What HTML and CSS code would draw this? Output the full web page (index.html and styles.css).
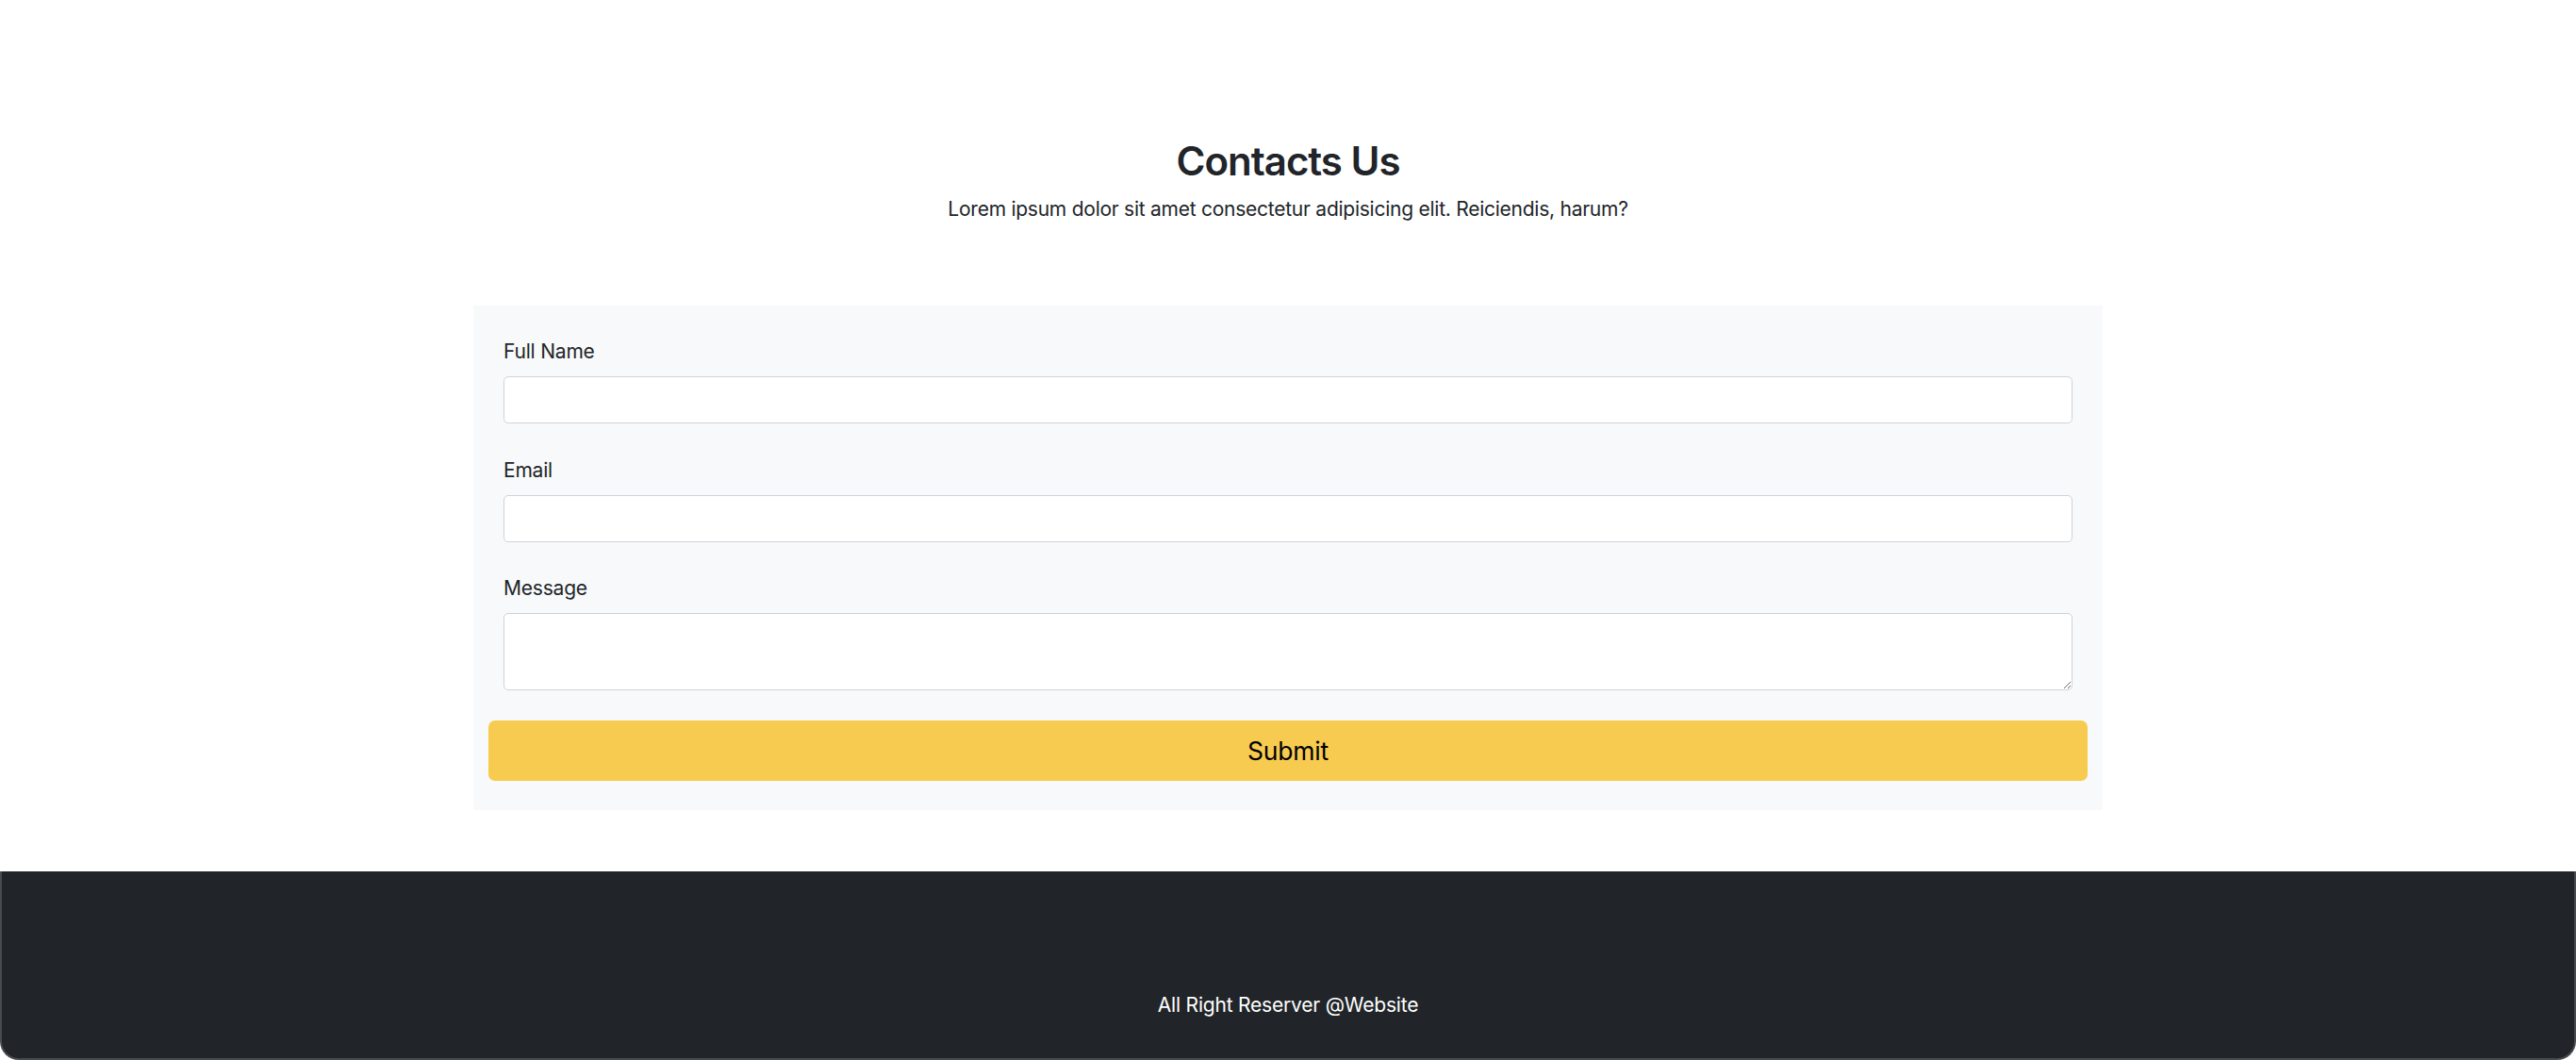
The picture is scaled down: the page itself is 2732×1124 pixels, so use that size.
FILE: index.html
```html
<!DOCTYPE html>
<html lang="en">
<head>
<meta charset="utf-8">
<title>Contacts Us</title>
<link rel="stylesheet" href="styles.css">
</head>
<body>
<div class="page">
  <main class="main">
    <header class="intro">
      <h2 class="title">Contacts Us</h2>
      <p class="lead">Lorem ipsum dolor sit amet consectetur adipisicing elit. Reiciendis, harum?</p>
    </header>
    <form class="card">
      <div class="group">
        <label class="label" for="name">Full Name</label>
        <input class="control" id="name" type="text">
      </div>
      <div class="group">
        <label class="label" for="email">Email</label>
        <input class="control" id="email" type="email">
      </div>
      <div class="group group-last">
        <label class="label" for="msg">Message</label>
        <textarea class="control area" id="msg" rows="2"></textarea>
      </div>
      <button class="submit" type="button">Submit</button>
    </form>
  </main>
  <footer class="footer">
    <p class="footer-text">All Right Reserver @Website</p>
  </footer>
</div>
</body>
</html>
```
FILE: styles.css
```css
* { box-sizing: border-box; }
html, body {
  margin: 0;
  padding: 0;
}
body {
  background: #2a2e3a;
  font-family: Inter, "Noto Sans", "Liberation Sans", sans-serif;
  color: #212529;
  font-size: 21px;
  line-height: 1.5;
}
.page {
  background: #ffffff;
  min-height: 1124px;
  display: flex;
  flex-direction: column;
}
.main {
  display: flex;
  flex-direction: column;
  align-items: center;
  padding-top: 146px;
  padding-bottom: 65px;
}
.intro {
  text-align: center;
}
.title {
  margin: 0 0 9.5px 0;
  font-size: 42px;
  line-height: 1.2;
  font-weight: 600;
  letter-spacing: -1px;
}
.lead {
  margin: 0;
  font-size: 21px;
  line-height: 31.5px;
  letter-spacing: -0.25px;
}
.card {
  margin-top: 87px;
  width: 1728px;
  background: #f8f9fa;
  padding: 33px 16px 31px 16px;
  display: flex;
  flex-direction: column;
}
.group {
  display: flex;
  flex-direction: column;
  padding: 0 16px;
  margin-bottom: 33.5px;
}
.group-last {
  margin-bottom: 32px;
}
.label {
  font-size: 21px;
  line-height: 31.5px;
  margin-bottom: 10.5px;
  letter-spacing: -0.2px;
}
.control {
  display: block;
  width: 100%;
  height: 50px;
  border: 1px solid #ced4da;
  border-radius: 5px;
  background: #ffffff;
  font-family: inherit;
  font-size: 21px;
  padding: 8px 16px;
  margin: 0;
}
.area {
  height: 82px;
  resize: vertical;
}
.submit {
  display: block;
  width: 100%;
  height: 64px;
  border: 0;
  border-radius: 7px;
  background: #f7cb50;
  color: #000000;
  font-family: inherit;
  font-size: 26.5px;
  line-height: 1.5;
  letter-spacing: -0.2px;
  margin: 0;
  padding: 0;
}
.footer {
  flex: 1;
  background: #212529;
  border-left: 2px solid #474a50;
  border-right: 2px solid #474a50;
  border-bottom: 2px solid #474a50;
  border-radius: 0 0 20px 20px;
  padding: 126px 0 40px 0;
  text-align: center;
}
.footer-text {
  margin: 0;
  color: #ffffff;
  font-size: 21px;
  line-height: 31.5px;
  letter-spacing: -0.2px;
}
```
